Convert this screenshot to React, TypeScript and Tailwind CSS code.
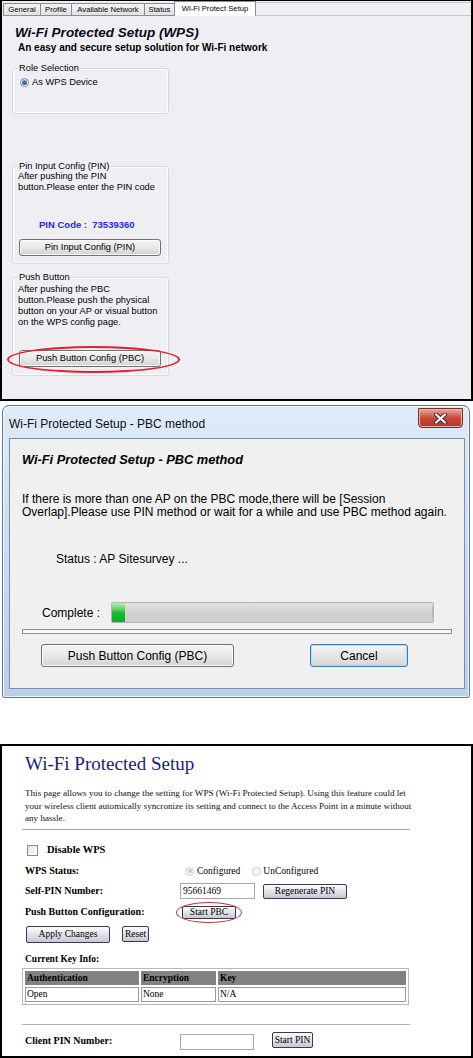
import React from 'react';

function WinBtn({ children, className = '' }: { children: React.ReactNode; className?: string }) {
  return (
    <div
      className={`flex items-center justify-center rounded-[3px] border border-[#707070] bg-linear-to-b from-[#f5f5f5] via-[#e8e8e8] to-[#d2d2d2] text-black shadow-[inset_0_0_0_1px_#fbfbfb] ${className}`}
    >
      {children}
    </div>
  );
}

function IeBtn({ children, className = '' }: { children: React.ReactNode; className?: string }) {
  return (
    <div
      className={`flex items-center justify-center rounded-[2px] border border-[#3a3a48] bg-linear-to-b from-[#fdfdfe] to-[#c6c8d6] text-[9.5px] leading-none text-black ${className}`}
    >
      {children}
    </div>
  );
}

function TopPanel() {
  const tabs = [
    { label: 'General', w: 'w-[37px]' },
    { label: 'Profile', w: 'w-[31px]' },
    { label: 'Available Network', w: 'w-[73px]' },
    { label: 'Status', w: 'w-[30px]' },
  ];
  return (
    <div className="relative h-[401px] w-[473px] border-x-2 border-t border-b-2 border-black bg-[#efeff3] font-['Liberation_Sans',Arial,sans-serif] text-black">
      <div className="flex h-[15px] items-end">
        <div className="ml-[1px] flex h-[13px]">
          {tabs.map((t) => (
            <div
              key={t.label}
              className={`${t.w} flex items-center justify-center border-t border-l border-b border-[#898c95] bg-linear-to-b from-[#f3f3f3] to-[#e2e2e2] text-[7.7px] leading-none whitespace-nowrap`}
            >
              {t.label}
            </div>
          ))}
        </div>
        <div className="flex h-[15px] w-[82px] items-center justify-center border-x border-t border-[#898c95] bg-white pb-[1px] text-[7.7px] leading-none whitespace-nowrap">
          Wi-Fi Protect Setup
        </div>
        <div className="h-[14px] flex-1 border-t border-b border-[#c9c9cf]" />
      </div>

      <div className="ml-[13px] mt-[9px] text-[13.5px] font-bold italic leading-[16px] text-[#0a0a1a]">
        Wi-Fi Protected Setup (WPS)
      </div>
      <div className="ml-[16px] mt-[1px] text-[10px] font-bold leading-[12px]">
        An easy and secure setup solution for Wi-Fi network
      </div>

      <fieldset className="ml-[10px] mt-[8.5px] h-[51px] w-[157px] rounded-[3px] border border-[#d2dbe2] px-[5px] shadow-[inset_0_0_0_1px_#ffffff]">
        <legend className="px-[1px] text-[9.3px] leading-[11px]">Role Selection</legend>
        <div className="ml-[2px] mt-[3px] flex h-[11px] items-center">
          <div className="flex h-[9px] w-[9px] items-center justify-center rounded-full border border-[#7f8896] bg-linear-to-b from-[#e6e6e6] to-white">
            <div className="h-[5px] w-[5px] rounded-full bg-linear-to-b from-[#6b8fb5] to-[#2a4f7a]" />
          </div>
          <span className="ml-[3px] text-[9.3px] leading-[11px]">As WPS Device</span>
        </div>
      </fieldset>

      <fieldset className="ml-[10px] mt-[47px] h-[103px] w-[157px] rounded-[3px] border border-[#d2dbe2] px-[5px] shadow-[inset_0_0_0_1px_#ffffff]">
        <legend className="px-[1px] text-[9.3px] leading-[11px]">Pin Input Config (PIN)</legend>
        <div className="-mt-[1px] text-[9.3px] leading-[11px] whitespace-nowrap">
          After pushing the PIN
          <br />
          button.Please enter the PIN code
        </div>
        <div className="ml-[21px] mt-[26.5px] text-[9.5px] font-bold leading-[12px] whitespace-pre text-[#2727ee]">
          PIN Code :  73539360
        </div>
        <WinBtn className="ml-[1px] mt-[8px] h-[17px] w-[142px] text-[9.3px]">Pin Input Config (PIN)</WinBtn>
      </fieldset>

      <fieldset className="ml-[10px] mt-[8px] h-[104px] w-[157px] rounded-[3px] border border-[#d2dbe2] px-[5px] shadow-[inset_0_0_0_1px_#ffffff]">
        <legend className="px-[1px] text-[9.3px] leading-[11px]">Push Button</legend>
        <div className="mt-[1px] text-[9.3px] leading-[11px] whitespace-nowrap">
          After pushing the PBC
          <br />
          button.Please push the physical
          <br />
          button on your AP or visual button
          <br />
          on the WPS config page.
        </div>
        <WinBtn className="ml-[1px] mt-[22.5px] h-[17px] w-[142px] text-[9.3px]">Push Button Config (PBC)</WinBtn>
      </fieldset>

      <div className="pointer-events-none absolute left-[5px] top-[345px] h-[27px] w-[173px] rounded-[50%] border-[2.5px] border-[#e3202c]" />
    </div>
  );
}

function Dialog() {
  return (
    <div className="relative mx-[2px] mt-[4px] flex h-[293px] w-[468px] flex-col rounded-t-[7px] rounded-b-[3px] border border-[#5f7594] bg-linear-to-b from-[#dfebf8] via-[#c9dcf1] to-[#b9d0ea] font-['Liberation_Sans',Arial,sans-serif] text-black shadow-[inset_0_0_0_1px_#eef5fc]">
      <div className="flex h-[32px] items-center pl-[6px] pt-[4px] text-[12px] leading-none text-[#101010]">
        Wi-Fi Protected Setup - PBC method
      </div>
      <div className="absolute right-[6px] top-[2px] flex h-[20px] w-[45px] items-center justify-center rounded-b-[4px] border border-[#7a2d27] bg-linear-to-b from-[#e9a99c] via-[#c8473b] to-[#b8382c] shadow-[inset_0_0_0_1px_#eeb3a8]">
        <svg width="15" height="11" viewBox="0 0 15 11">
          <path d="M3 1.5 L12 9.5 M12 1.5 L3 9.5" stroke="#3b2a2a" strokeWidth="4" strokeLinecap="round" />
          <path d="M3 1.5 L12 9.5 M12 1.5 L3 9.5" stroke="#ffffff" strokeWidth="2.2" strokeLinecap="round" />
        </svg>
      </div>

      <div className="ml-[6px] mr-[4px] h-[251px] border border-[#7d8ea6] bg-[#f0f0f0]">
        <div className="ml-[12px] mt-[13px] text-[12.8px] font-bold italic leading-[16px]">
          Wi-Fi Protected Setup - PBC method
        </div>
        <div className="ml-[12px] mt-[24.5px] text-[12px] leading-[13px] whitespace-nowrap">
          If there is more than one AP on the PBC mode,there will be [Session
          <br />
          Overlap].Please use PIN method or wait for a while and use PBC method again.
        </div>
        <div className="ml-[46px] mt-[33.5px] text-[12px] leading-[14px]">Status : AP Sitesurvey ...</div>
        <div className="mt-[36px] flex h-[21px] items-center">
          <span className="ml-[32px] w-[69px] text-[12px] leading-none">Complete :</span>
          <div className="relative h-[21px] w-[323px] overflow-hidden rounded-[2px] border border-[#b4b4b4] bg-linear-to-b from-[#e2e2e2] via-[#d2d2d2] to-[#cdcdcd]">
            <div className="absolute left-0 top-0 h-[19px] w-[13px] bg-linear-to-b from-[#b4f0b4] via-[#12c02c] to-[#08b020]" />
            <div className="absolute right-0 top-[3px] h-[13px] w-[1px] bg-[#9ad29a]" />
          </div>
        </div>
        <div className="ml-[12px] mt-[6px] h-[5px] w-[430px] border border-[#8f8f8f] bg-[#fafafa]" />
        <div className="mt-[10px] flex">
          <WinBtn className="ml-[31px] h-[23px] w-[193px] text-[12px]">Push Button Config (PBC)</WinBtn>
          <div className="ml-[76px] flex h-[23px] w-[98px] items-center justify-center rounded-[3px] border border-[#3c7fb1] bg-linear-to-b from-[#f4f4f4] via-[#e6e6e6] to-[#d6d6d6] text-[12px] shadow-[inset_0_0_0_1px_#a9d9f5]">
            Cancel
          </div>
        </div>
      </div>
    </div>
  );
}

function Radio({ checked }: { checked?: boolean }) {
  return (
    <div className="flex h-[9px] w-[9px] items-center justify-center rounded-full border border-[#cfcfcf] bg-[#f6f6f6]">
      {checked && <div className="h-[4px] w-[4px] rounded-full bg-[#c9c9c9]" />}
    </div>
  );
}

function RouterPage() {
  return (
    <div className="mt-[46px] h-[314px] w-[473px] border-2 border-black bg-white font-['Liberation_Serif','Times_New_Roman',serif] text-black">
      <div className="ml-[23px] mt-[7px] text-[19px] leading-[22px] text-[#1b1b82]">Wi-Fi Protected Setup</div>
      <div className="ml-[23px] mt-[12px] text-[9.1px] leading-[12.5px] whitespace-nowrap text-[#111]">
        This page allows you to change the setting for WPS (Wi-Fi Protected Setup). Using this feature could let
        <br />
        your wireless client automically syncronize its setting and connect to the Access Point in a minute without
        <br />
        any hassle.
      </div>
      <div className="ml-[20px] mt-[4.75px] h-[1px] w-[388px] bg-[#a3a3a3]" />

      <div className="ml-[25px] mt-[13px] flex h-[14px] items-center">
        <div className="h-[11px] w-[11px] border border-[#8a8a8a] bg-linear-to-br from-[#e4e4e4] to-white" />
        <span className="ml-[9px] text-[10.5px] font-bold leading-none">Disable WPS</span>
      </div>

      <div className="mt-[7px] flex h-[14px] items-center">
        <span className="ml-[23px] w-[155px] text-[10px] font-bold leading-none">WPS Status:</span>
        <div className="ml-[5px]">
          <Radio checked />
        </div>
        <span className="ml-[3px] text-[9.5px] leading-none">Configured</span>
        <div className="ml-[12px]">
          <Radio />
        </div>
        <span className="ml-[2px] text-[9.5px] leading-none">UnConfigured</span>
      </div>

      <div className="mt-[5px] flex h-[16px] items-center">
        <span className="ml-[23px] w-[155px] text-[10px] font-bold leading-none">Self-PIN Number:</span>
        <div className="flex h-[16px] w-[75px] items-center border border-[#a7a7a7] pl-[2px] text-[9.5px] leading-none">
          95661469
        </div>
        <IeBtn className="ml-[8px] h-[15px] w-[84px]">Regenerate PIN</IeBtn>
      </div>

      <div className="mt-[5px] flex h-[16px] items-center">
        <span className="ml-[23px] w-[155px] text-[10px] font-bold leading-none">Push Button Configuration:</span>
        <div className="relative ml-[2px]">
          <IeBtn className="h-[13px] w-[54px]">Start PBC</IeBtn>
          <div className="pointer-events-none absolute -left-[6px] -top-[4px] h-[21px] w-[66px] rounded-[50%] border border-[#c23a3a]" />
        </div>
      </div>

      <div className="mt-[6px] flex h-[17px] items-start">
        <IeBtn className="ml-[24px] h-[17px] w-[84px]">Apply Changes</IeBtn>
        <IeBtn className="ml-[12px] h-[16px] w-[27px]">Reset</IeBtn>
      </div>

      <div className="ml-[23px] mt-[10px] text-[9.5px] font-bold leading-[12px]">Current Key Info:</div>

      <table className="ml-[20px] mt-[3px] w-[387px] border-separate border-spacing-[2px] border border-[#b8b8b8] text-left text-[9.5px] leading-none">
        <thead>
          <tr className="h-[14px] bg-[#828282]">
            <th className="w-[114px] pl-[2px] font-bold">Authentication</th>
            <th className="w-[75px] pl-[2px] font-bold">Encryption</th>
            <th className="pl-[2px] font-bold">Key</th>
          </tr>
        </thead>
        <tbody>
          <tr className="h-[15px]">
            <td className="border border-[#9a9a9a] pl-[1px] font-normal">Open</td>
            <td className="border border-[#9a9a9a] pl-[1px]">None</td>
            <td className="border border-[#9a9a9a] pl-[1px]">N/A</td>
          </tr>
        </tbody>
      </table>

      <div className="ml-[20px] mt-[19px] h-[1px] w-[388px] bg-[#b0b0b0]" />

      <div className="mt-[7px] flex h-[18px] items-start">
        <span className="ml-[23px] mt-[4px] w-[155px] text-[10px] font-bold leading-none">Client PIN Number:</span>
        <div className="mt-[2px] h-[16px] w-[74px] border border-[#a7a7a7]" />
        <IeBtn className="ml-[18px] h-[16px] w-[41px]">Start PIN</IeBtn>
      </div>
    </div>
  );
}

export default function App() {
  return (
    <div className="min-h-[1058px] w-[473px] bg-white">
      <TopPanel />
      <Dialog />
      <RouterPage />
    </div>
  );
}
